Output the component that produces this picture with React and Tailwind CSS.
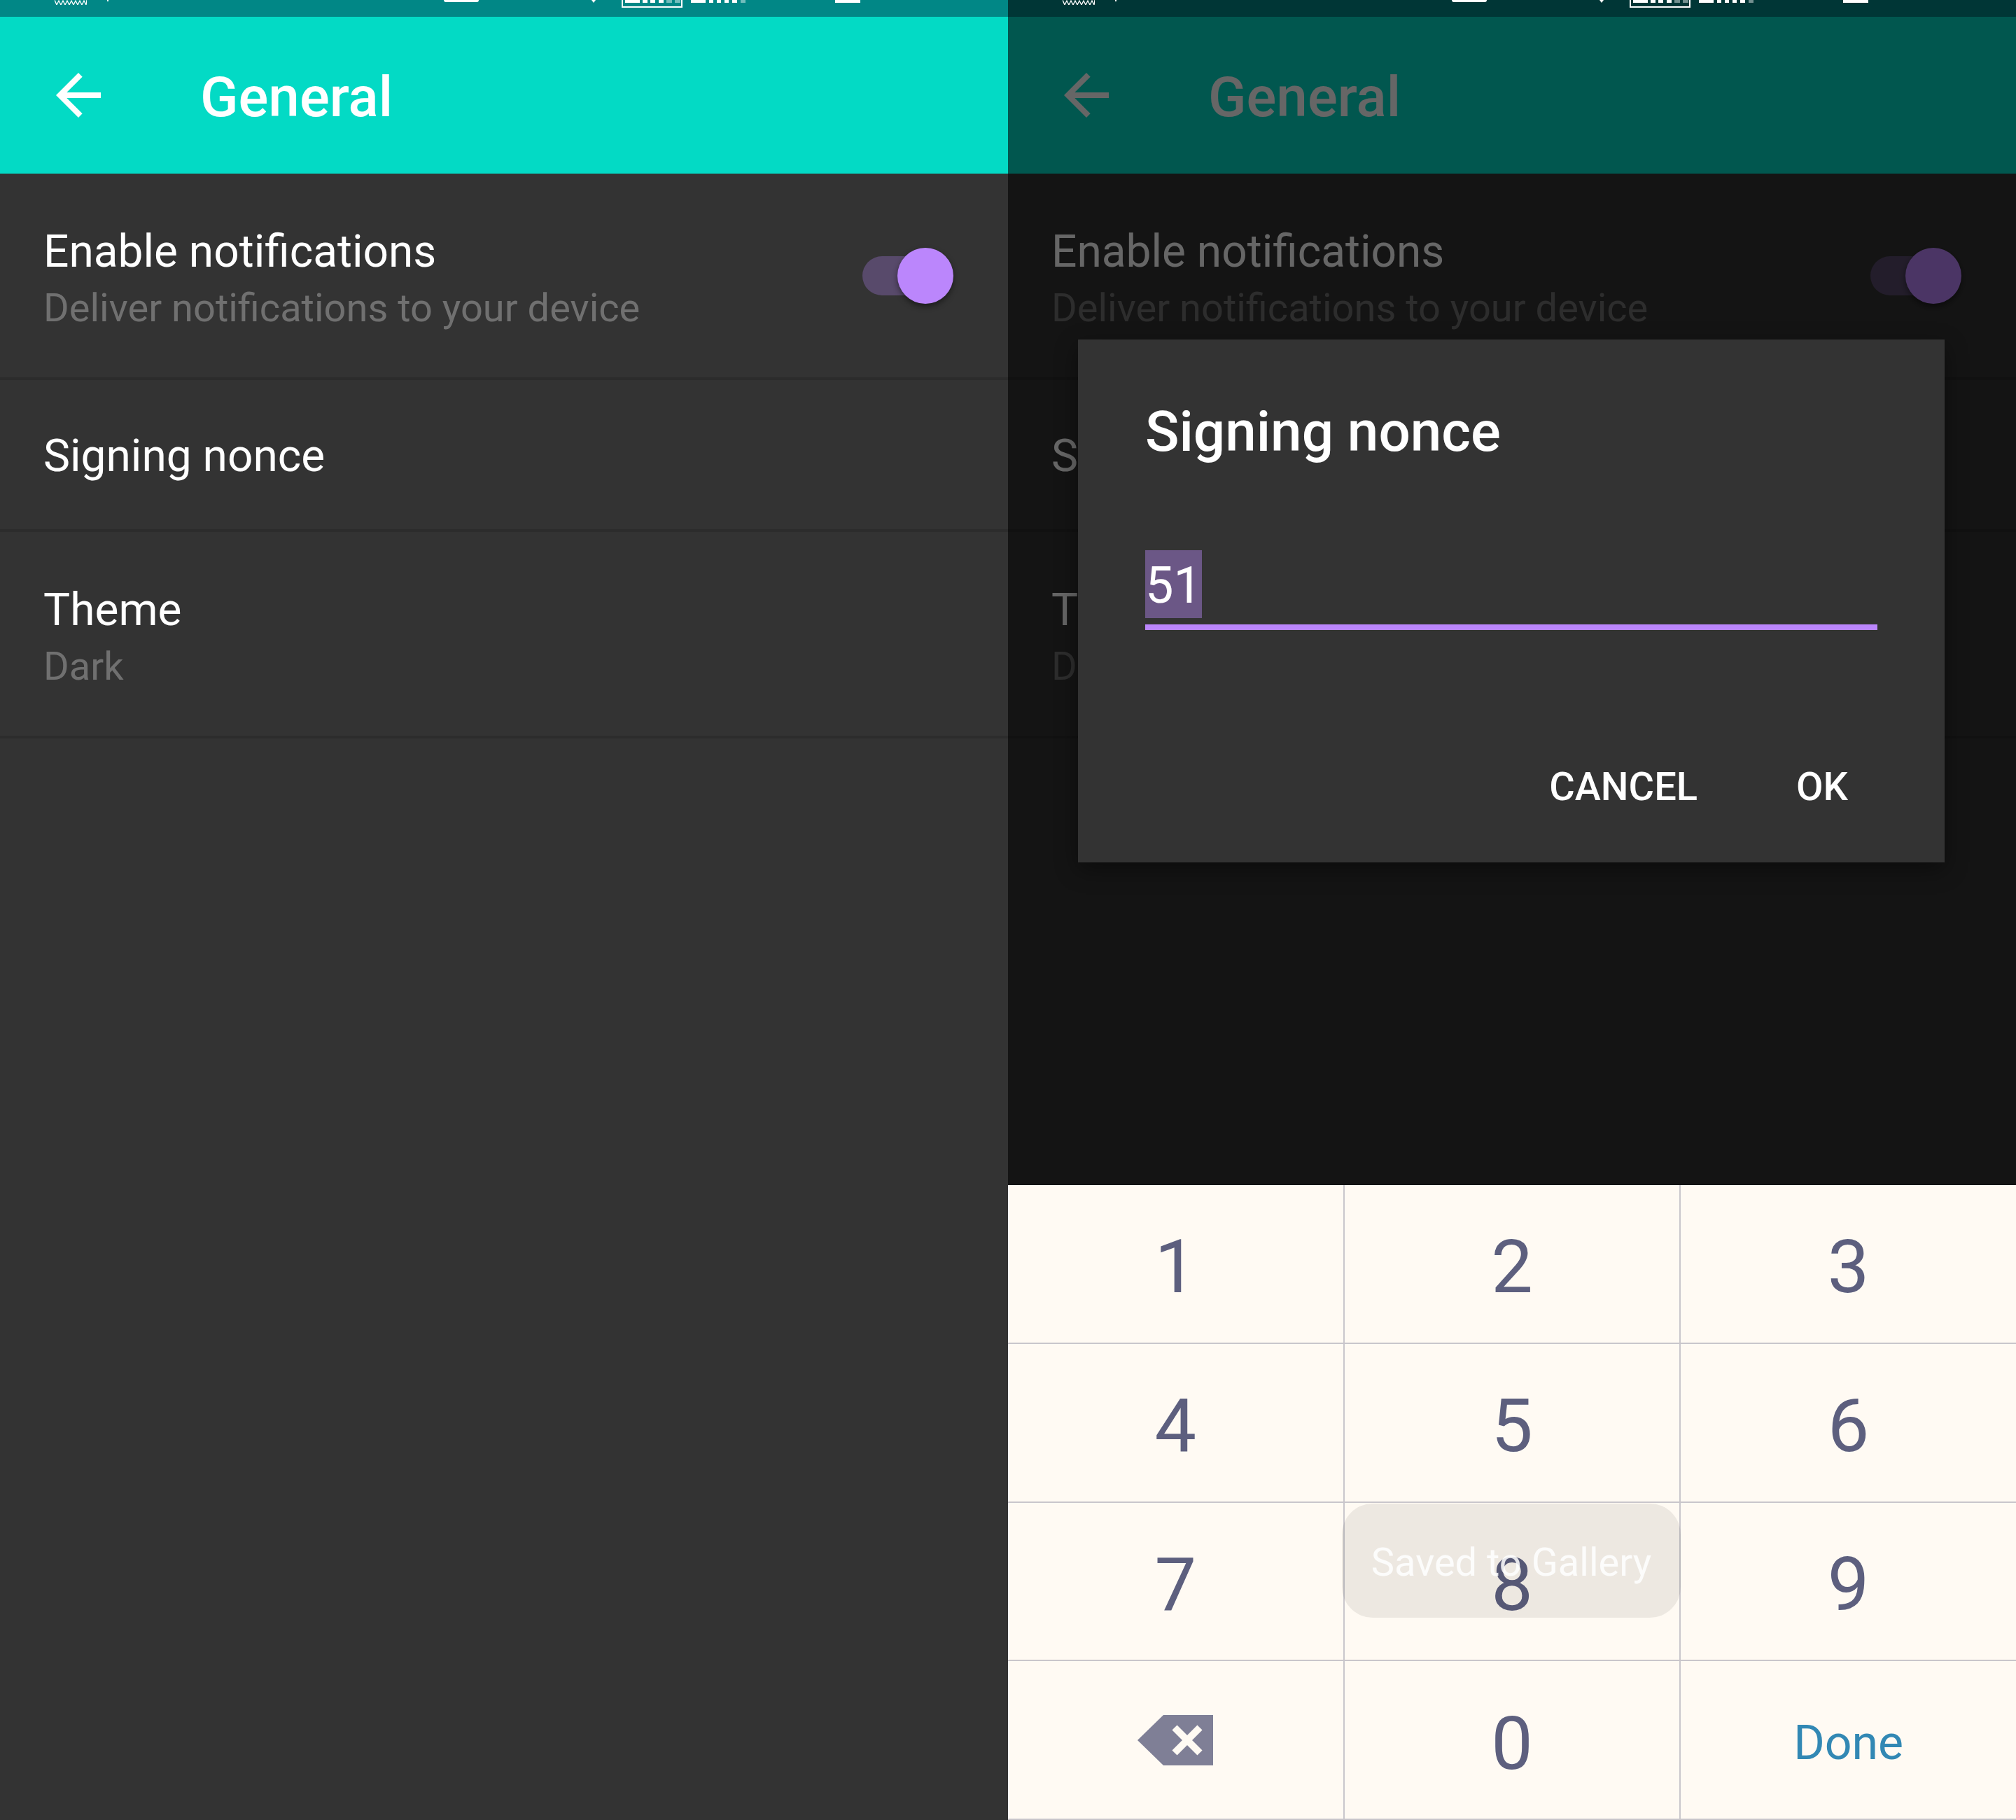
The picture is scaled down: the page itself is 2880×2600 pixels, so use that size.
import React from "react";

const BackArrow = ({ color }) => (
  <svg viewBox="0 0 24 24" className="w-[96px] h-[96px]">
    <path fill={color} d="M20 11H7.83l5.59-5.59L12 4l-8 8 8 8 1.41-1.41L7.83 13H20v-2z" />
  </svg>
);

const Bars = ({ segs, light, h = 4 }) => {
  const w = segs[segs.length - 1][1];
  return (
    <svg width={w} height={h} viewBox={`0 0 ${w} ${h}`}>
      {segs.map(([a, b], i) => (
        <rect key={i} x={a} y="0" width={b - a} height={h} fill={i >= segs.length - light ? "rgba(255,255,255,0.45)" : "#fff"} />
      ))}
    </svg>
  );
};

const StatusBar = ({ bg }) => (
  <div className={`h-[24px] flex items-start ${bg}`}>
    {/* cut-off status icons */}
    <svg width="46" height="7" viewBox="0 0 46 7" className="ml-[78px]">
      <path d="M0 0L3 7L6 1L9 7L12 1L15 7L18 1L21 7L24 1L27 7L30 1L33 7L36 1L39 7L42 1L45 7L46 0" fill="none" stroke="#fff" strokeWidth="1.3" />
    </svg>
    <div className="ml-[29px] w-[2px] h-[2px] bg-white" />
    <div className="ml-[479px] w-[50px] h-[3px] bg-white rounded-b-full" />
    <svg width="6" height="4" viewBox="0 0 6 4" className="ml-[161px]">
      <path d="M0 0H6L3 4z" fill="#fff" />
    </svg>
    <div className="ml-[37px] w-[87px] h-[11px] border-x-2 border-b-2 border-white">
      <div className="pl-[3px]">
        <Bars segs={[[0, 21], [25, 32], [36, 43], [48, 55], [59, 67], [71, 79]]} light={2} />
      </div>
    </div>
    <div className="ml-[12px]">
      <Bars segs={[[0, 21], [26, 32], [37, 43], [48, 54], [59, 66], [71, 78]]} light={1} />
    </div>
    <div className="ml-[128px] w-[36px] h-[4px] bg-white" />
  </div>
);

const Switch = () => (
  <div className="relative w-[130px] h-[80px] mr-[78px]">
    <div className="absolute left-0 top-[12px] w-[116px] h-[56px] rounded-full bg-[#584a6b]" />
    <div className="absolute right-0 top-0 w-[80px] h-[80px] rounded-full bg-[#bb86fc] shadow-[0_4px_8px_rgba(0,0,0,0.45)]" />
  </div>
);

const Row = ({ title, summary, toggle }) => (
  <div className={`flex items-center justify-between pl-[62px] ${summary ? "h-[291px]" : "h-[213px]"}`}>
    <div className={summary ? "pt-[8px]" : "pt-[4px]"}>
      <div className="text-[64px] leading-[75px] text-white">{title}</div>
      {summary && <div className="mt-[10px] text-[56px] leading-[66px] text-[#707070]">{summary}</div>}
    </div>
    {toggle && <Switch />}
  </div>
);

const Divider = () => <div className="h-[4px] bg-[#2c2c2c]" />;

const Settings = () => (
  <div className="flex flex-col flex-1 bg-[#333333]">
    <div className="h-[224px] flex items-center bg-[#03dac5]">
      <div className="ml-[64px]">
        <BackArrow color="#ffffff" />
      </div>
      <div className="ml-[126px] pt-[5px] text-[80px] font-medium text-white">General</div>
    </div>
    <Row title="Enable notifications" summary="Deliver notifications to your device" toggle />
    <Divider />
    <Row title="Signing nonce" />
    <Divider />
    <Row title="Theme" summary="Dark" />
    <Divider />
  </div>
);

const keys = ["1", "2", "3", "4", "5", "6", "7", "8", "9", "del", "0", "Done"];

const Backspace = () => (
  <svg width="108" height="72" viewBox="0 0 108 72">
    <path d="M0 36L37 0H108V72H37z" fill="#7f7f96" />
    <path d="M53 18L89 54M89 18L53 54" stroke="#fffaf3" strokeWidth="10" />
  </svg>
);

const Keyboard = () => (
  <div className="relative h-[907px] bg-[#c9c6cb] pb-[2px] grid grid-cols-3 grid-rows-4 gap-[2px]">
    {keys.map((k) => (
      <div key={k} className="bg-[#fffaf3] flex items-center justify-center">
        {k === "del" ? (
          <Backspace />
        ) : k === "Done" ? (
          <span className="pt-[8px] text-[68px] text-[#3288b4]">Done</span>
        ) : (
          <span className="pt-[10px] text-[106px] leading-none text-[#5d5f7e]">{k}</span>
        )}
      </div>
    ))}
    <div className="absolute left-[477px] top-[455px] w-[484px] h-[163px] rounded-[44px] bg-black/[0.07] flex items-center justify-center pt-[4px] text-[56px] text-white/85">
      Saved to Gallery
    </div>
  </div>
);

const Dialog = () => (
  <div className="w-[1238px] bg-[#333333] pt-[85px] pb-[75px] shadow-[0_10px_30px_rgba(0,0,0,0.4)]">
    <div className="pl-[96px] text-[80px] leading-[94px] font-medium text-white">Signing nonce</div>
    <div className="mt-[122px] pl-[96px] pr-[96px]">
      <span className="inline-block h-[97px] pt-[9px] bg-[#6b5786] text-[72px] leading-[84px] text-white">51</span>
      <div className="mt-[9px] h-[8px] bg-[#bb86fc]" />
    </div>
    <div className="mt-[191px] flex justify-end gap-[141px] pr-[138px] text-[56px] leading-[66px] font-medium text-white">
      <span>CANCEL</span>
      <span>OK</span>
    </div>
  </div>
);

export default function App() {
  return (
    <div className="w-[2880px] h-[2600px] flex font-['Roboto',sans-serif]">
      <div className="w-[1440px] flex flex-col bg-[#333333]">
        <StatusBar bg="bg-[#018786]" />
        <Settings />
      </div>
      <div className="w-[1440px] flex flex-col">
        <StatusBar bg="bg-[#003636]" />
        <div className="relative h-[1669px] flex flex-col">
          <Settings />
          <div className="absolute inset-0 bg-black/60 pl-[100px] pt-[461px]">
            <Dialog />
          </div>
        </div>
        <Keyboard />
      </div>
    </div>
  );
}
